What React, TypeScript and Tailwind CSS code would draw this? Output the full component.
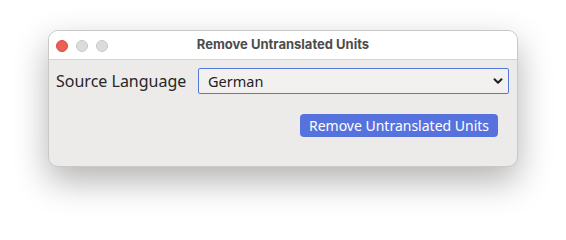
import { ChevronDown } from "lucide-react";

const languages = ["German", "French", "Spanish", "Italian", "Japanese"];

function TrafficLights() {
  return (
    <div className="absolute left-[7px] top-[9px] flex gap-[8px]">
      <span className="h-[12px] w-[12px] rounded-full border border-[#d94a3f] bg-[#ec5f56]" />
      <span className="h-[12px] w-[12px] rounded-full border border-[#c8c8c8] bg-[#dcdcdc]" />
      <span className="h-[12px] w-[12px] rounded-full border border-[#c8c8c8] bg-[#dcdcdc]" />
    </div>
  );
}

export default function App() {
  return (
    <div className="h-[235px] w-[566px] bg-white pl-[48px] pt-[30px]">
      <div className="flex h-[137px] w-[470px] flex-col overflow-hidden rounded-[10px] border border-[#c9c8c7] bg-[#ecebea] shadow-[0_14px_34px_rgba(0,0,0,0.3)]">
        <div className="relative flex h-[29px] shrink-0 items-center justify-center border-b border-[#d4d3d2] bg-white">
          <TrafficLights />
          <span className="font-['Inter',sans-serif] text-[13px] font-bold text-[#4c4c4c]">
            Remove Untranslated Units
          </span>
        </div>

        <div className="flex flex-col px-[7px] pt-[8px]">
          <div className="flex items-center">
            <label className="w-[142px] font-['Noto_Sans',sans-serif] text-[16px] text-[#262626]">
              Source Language
            </label>
            <div className="relative h-[26px] w-[311px] rounded-[2px] border border-[#5477da] bg-[#f2f1f0]">
              <select
                defaultValue="German"
                className="h-full w-full appearance-none bg-transparent pl-[9px] font-['Noto_Sans',sans-serif] text-[14.5px] text-[#1f1f1f] outline-none"
              >
                {languages.map((lang) => (
                  <option key={lang}>{lang}</option>
                ))}
              </select>
              <ChevronDown
                className="pointer-events-none absolute right-[3px] top-[5px] h-[14px] w-[14px] text-[#222]"
                strokeWidth={3.5}
              />
            </div>
          </div>

          <div className="flex justify-end pr-[12px] pt-[20px]">
            <button className="h-[23px] w-[198px] rounded-[4px] bg-[#5673dd] font-['Noto_Sans',sans-serif] text-[14px] text-white">
              Remove Untranslated Units
            </button>
          </div>
        </div>
      </div>
    </div>
  );
}
